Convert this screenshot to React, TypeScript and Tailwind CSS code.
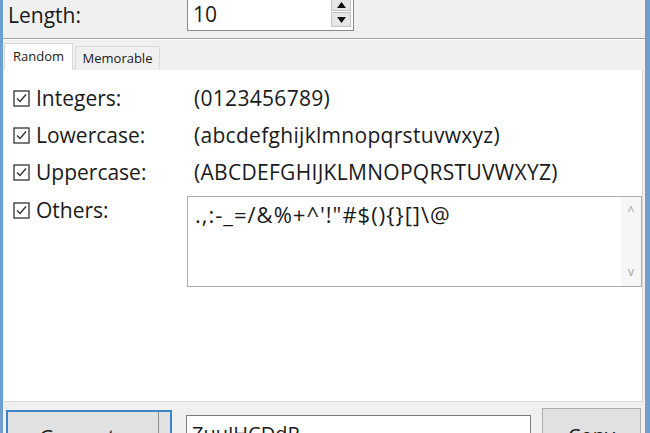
import * as React from 'react';

const font = { fontFamily: '"Open Sans", "Noto Sans", "Liberation Sans", sans-serif' };

const rows = [
    { label: 'Integers:', value: '(0123456789)' },
    { label: 'Lowercase:', value: '(abcdefghijklmnopqrstuvwxyz)' },
    { label: 'Uppercase:', value: '(ABCDEFGHIJKLMNOPQRSTUVWXYZ)' },
];

function CheckBox() {
    return (
        <svg width="17" height="17" viewBox="0 0 17 17" className="shrink-0">
            <rect x="1" y="1" width="15" height="15" fill="white" stroke="#333" strokeWidth="1.3" />
            <path d="M4 8.5 L7 11.5 L13 4.5" fill="none" stroke="#333" strokeWidth="1.4" />
        </svg>
    );
}

function Arrow({ up }: { up?: boolean }) {
    return (
        <svg width="9" height="6" viewBox="0 0 9 6">
            <path d={up ? 'M0 6 L4.5 0 L9 6 Z' : 'M0 0 L4.5 6 L9 0 Z'} fill="#111" />
        </svg>
    );
}

export default function App() {
    return (
        <div
            className="w-[650px] h-[433px] overflow-hidden bg-[#f0f0f0] border-l-[3px] border-r-[5px] border-[#6f9fcf] flex flex-col text-[#1a1a1a]"
            style={font}
        >
            {/* length row */}
            <div className="h-[38px] flex items-start shrink-0">
                <span className="pl-[5px] text-[21px] leading-[28px] pt-[1px] w-[184px]">Length:</span>
                <div className="-mt-[6px] w-[167px] h-[37px] bg-white border border-[#8a8a8a] flex">
                    <span className="pl-[5px] pt-[5px] text-[21px] leading-[28px] flex-1">10</span>
                    <div className="w-[22px] flex flex-col gap-[1px] pr-[2px] pb-[3px]">
                        <div className="flex-1 bg-[#e6e6e6] border border-[#c4c4c4] flex items-center justify-center pt-[4px]">
                            <Arrow up />
                        </div>
                        <div className="h-[15px] bg-[#e6e6e6] border border-[#c4c4c4] flex items-center justify-center">
                            <Arrow />
                        </div>
                    </div>
                </div>
            </div>
            <div className="h-[2px] border-t border-[#a3a3a3] border-b border-b-white shrink-0" />

            {/* tabs */}
            <div className="h-[30px] flex items-end pl-[1px] shrink-0">
                <div className="w-[69px] h-[27px] bg-white border border-b-0 border-[#d9d9d9] text-[13px] flex items-center justify-center pb-[1px]">
                    Random
                </div>
                <div className="w-[85px] h-[24px] ml-[2px] bg-[#f0f0f0] border border-b-0 border-[#d9d9d9] text-[13px] flex items-center justify-center">
                    Memorable
                </div>
            </div>

            {/* panel */}
            <div className="ml-[1px] w-[639px] h-[332px] bg-white border-r border-b border-[#d9d9d9] shrink-0 pt-[10px]">
                {rows.map((r) => (
                    <div key={r.label} className="h-[37px] flex items-center">
                        <div className="w-[32px] pl-[9px]"><CheckBox /></div>
                        <span className="w-[158px] text-[21px]">{r.label}</span>
                        <span className="text-[21px] tracking-[0.3px]">{r.value}</span>
                    </div>
                ))}
                <div className="flex mt-[5px]">
                    <div className="w-[32px] pl-[9px] pt-[6px]"><CheckBox /></div>
                    <span className="w-[151px] text-[21px] leading-[28px]">Others:</span>
                    <div className="flex-1 h-[91px] border border-[#acacac] flex">
                        <span className="flex-1 pl-[7px] pt-[3px] text-[22px] leading-[28px] tracking-[1px]">.,:-_=/&amp;%+^'!"#$(){'{'}{'}'}[]\@</span>
                        <div className="w-[20px] bg-[#f6f6f6] flex flex-col items-center justify-between py-[8px] text-[#a0a0a0] text-[12px] leading-none">
                            <span>^</span>
                            <span>v</span>
                        </div>
                    </div>
                </div>
            </div>

            {/* bottom bar */}
            <div className="flex items-start pt-[6px] pl-[3px]">
                <div className="mt-[2px] w-[166px] h-[40px] border-2 border-[#3a86c8] bg-[#e1e1e1] flex">
                    <span className="flex-1 text-center text-[20px] pt-[10px]">Generate</span>
                    <div className="w-[12px] border-l border-[#8a8a8a] flex items-end justify-center pb-[2px]">
                        <Arrow />
                    </div>
                </div>
                <div className="ml-[14px] mt-[7px] w-[345px] h-[36px] bg-white border border-[#7a7a7a] pl-[5px] pt-[3px] text-[20px]">
                    ZuuJHCDdP
                </div>
                <div className="ml-[11px] w-[99px] h-[38px] bg-[#e1e1e1] border border-[#adadad] text-center text-[20px] pt-[12px]">
                    Copy
                </div>
            </div>
        </div>
    );
}
